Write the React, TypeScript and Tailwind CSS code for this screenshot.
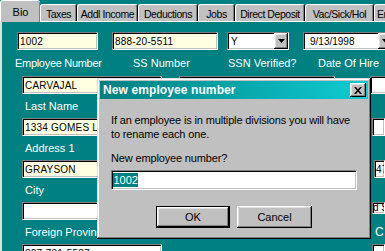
import React from "react";

const sunk =
  "border border-t-[#808080] border-l-[#808080] border-b-white border-r-white shadow-[inset_1px_1px_0_#000,inset_-1px_-1px_0_#c0c0c0]";
const raised =
  "bg-[#c0c0c0] shadow-[inset_-1px_-1px_0_#000,inset_1px_1px_0_#fff,inset_-2px_-2px_0_#808080,inset_2px_2px_0_#dfdfdf]";

function Tab({ w, label, selected, left }: { w: string; label: string; selected?: boolean; left?: boolean }) {
  if (selected) {
    return (
      <div
        className={`${w} shrink-0 h-[22px] -mb-[1px] relative z-10 bg-[#c0c0c0] border-t border-l border-white rounded-tl-[3px] rounded-tr-[3px] shadow-[inset_-1px_0_0_#808080] flex items-start justify-center pt-[3px] text-[11px] text-black`}
      >
        {label}
      </div>
    );
  }
  return (
    <div
      className={`${w} shrink-0 h-[17px] bg-[#c0c0c0] border-t border-l border-white border-r border-r-black rounded-tl-[3px] rounded-tr-[3px] shadow-[inset_-1px_0_0_#808080] flex items-start ${left ? "justify-start pl-[2px]" : "justify-center"} pt-[2px] text-[10.5px] tracking-[-0.45px] text-black whitespace-nowrap overflow-hidden`}
    >
      {label}
    </div>
  );
}

function DropBtn() {
  return (
    <div className={`${raised} w-[14px] shrink-0 h-full flex items-center justify-center`}>
      <svg width="7" height="4" viewBox="0 0 7 4">
        <path d="M0 0h7L3.5 4z" fill="#000" />
      </svg>
    </div>
  );
}

function Field({ cls, text, yellow, pad }: { cls: string; text?: string; yellow?: boolean; pad?: string }) {
  return (
    <div
      className={`${cls} shrink-0 ${sunk} ${yellow ? "bg-[#ffffe1]" : "bg-white"} h-[18px] flex items-center ${pad ?? "pl-[2px]"} text-[10px] tracking-[0.2px] text-black whitespace-nowrap overflow-hidden`}
    >
      {text}
    </div>
  );
}

export default function App() {
  return (
    <div className="relative w-[385px] h-[251px] overflow-hidden bg-[#008080] font-['Liberation_Sans',Arial,sans-serif]">
      {/* tabs */}
      <div className="flex items-end h-[21px] overflow-visible">
        <Tab w="w-[40px]" label="Bio" selected />
        <Tab w="w-[37px]" label="Taxes" />
        <Tab w="w-[61px]" label="Addl Income" />
        <Tab w="w-[60px]" label="Deductions" />
        <Tab w="w-[37px]" label="Jobs" />
        <Tab w="w-[70px]" label="Direct Deposit" />
        <Tab w="w-[69px]" label="Vac/Sick/Hol" />
        <Tab w="w-[60px]" label="Emergency" left />
      </div>

      {/* panel */}
      <div className="border-t border-l-2 border-t-white border-l-[#dfdfdf] h-[230px] flex flex-col">
        {/* row 1 */}
        <div className="flex items-center mt-[10px] h-[18px]">
          <Field cls="ml-[15px] w-[81px]" text="1002" yellow />
          <Field cls="ml-[14px] w-[106px]" text="888-20-5511" yellow />
          <div className={`ml-[9px] w-[62px] shrink-0 h-[18px] ${sunk} bg-white flex items-center`}>
            <span className="flex-1 pl-[3px] text-[10px] text-black">Y</span>
            <DropBtn />
          </div>
          <div className={`ml-[14px] w-[90px] shrink-0 h-[18px] ${sunk} bg-white flex items-center`}>
            <span className="flex-1 pl-[6px] text-[10px] text-black">9/13/1998</span>
            <DropBtn />
          </div>
        </div>
        {/* labels row 1 */}
        <div className="flex mt-[6px] h-[14px] text-[11px] leading-[14px] text-white whitespace-nowrap">
          <span className="ml-[13px] w-[118px] shrink-0 tracking-[-0.3px]">Employee Number</span>
          <span className="w-[95px] shrink-0">SS Number</span>
          <span className="w-[90px] shrink-0">SSN Verified?</span>
          <span>Date Of Hire</span>
        </div>

        {/* row 2 */}
        <div className="flex mt-[6px] h-[18px]">
          <Field cls="ml-[20px] w-[140px]" text="CARVAJAL" yellow />
          <Field cls="ml-[17px] w-[156px]" />
          <Field cls="ml-[35px] w-[20px]" />
        </div>
        <div className="flex mt-[5px] h-[14px] text-[11px] leading-[14px] text-white whitespace-nowrap">
          <span className="ml-[23px]">Last Name</span>
        </div>

        {/* row 3 */}
        <div className="flex mt-[5px] h-[18px]">
          <Field cls="ml-[20px] w-[140px]" text="1334 GOMES LN" yellow />
          <div className="flex-1" />
          <Field cls="w-[13px]" />
        </div>
        <div className="flex mt-[5px] h-[14px] text-[11px] leading-[14px] text-white whitespace-nowrap">
          <span className="ml-[23px]">Address 1</span>
        </div>

        {/* row 4 */}
        <div className="flex mt-[5px] h-[18px]">
          <Field cls="ml-[20px] w-[140px]" text="GRAYSON" yellow />
          <div className="flex-1" />
          <Field cls="w-[11px]" text="47" pad="pl-[1px]" />
        </div>
        <div className="flex mt-[5px] h-[14px] text-[11px] leading-[14px] text-white whitespace-nowrap">
          <span className="ml-[23px]">City</span>
        </div>

        {/* row 5 */}
        <div className="flex mt-[5px] h-[18px] items-start">
          <Field cls="ml-[20px] w-[140px]" />
          <div className="flex-1" />
          <div className={`w-[13px] shrink-0 h-[12px] ${sunk} bg-white text-[10px] leading-[10px] text-black overflow-hidden whitespace-nowrap`}>d S</div>
        </div>
        <div className="flex mt-[5px] h-[14px] text-[11px] leading-[14px] text-white whitespace-nowrap">
          <span className="ml-[23px]">Foreign Province</span>
          <div className="flex-1" />
          <span className="w-[10px] shrink-0 text-[12px]">C</span>
        </div>

        {/* row 6 */}
        <div className="flex mt-[5px] h-[18px]">
          <Field cls="ml-[20px] w-[140px]" text="827-731-5587" />
          <div className="flex-1" />
          <Field cls="w-[13px]" />
        </div>
      </div>

      {/* dialog */}
      <div className="absolute left-[97px] top-[78px] w-[274px] h-[161px] bg-[#c0c0c0] shadow-[inset_-1px_-1px_0_#000,inset_1px_1px_0_#dfdfdf,inset_-2px_-2px_0_#808080,inset_2px_2px_0_#fff] p-[3px] flex flex-col">
        <div className="h-[18px] bg-gradient-to-r from-[#008080] to-[#10ccd4] flex items-center pl-[3px] pr-[2px]">
          <span className="flex-1 text-white font-bold text-[12px] tracking-[0.1px]">New employee number</span>
          <div className={`${raised} w-[16px] h-[14px] flex items-center justify-center`}>
            <svg width="8" height="7" viewBox="0 0 8 7">
              <path d="M0 0h2l2 2.5L6 0h2L5 3.5 8 7H6L4 4.5 2 7H0l3-3.5z" fill="#000" />
            </svg>
          </div>
        </div>
        <div className="mt-[14px] ml-[11px] text-[11px] leading-[14px] text-black tracking-[-0.15px]">
          <div>If an employee is in multiple divisions you will have</div>
          <div>to rename each one.</div>
        </div>
        <div className="mt-[10px] ml-[11px] text-[11px] leading-[14px] text-black tracking-[-0.15px]">
          New employee number?
        </div>
        <div className={`mt-[5px] ml-[11px] w-[246px] h-[20px] ${sunk} bg-white flex items-center pl-[1px]`}>
          <span className="bg-[#008080] text-white text-[11px] leading-[14px] px-[0.5px]">1002</span>
        </div>
        <div className="mt-[16px] flex justify-center gap-[7px]">
          <div className="w-[74px] h-[22px] border border-black">
            <div className={`${raised} w-full h-full flex items-center justify-center text-[11px] text-black`}>OK</div>
          </div>
          <div className={`${raised} w-[75px] h-[22px] flex items-center justify-center text-[11px] text-black`}>Cancel</div>
        </div>
      </div>
    </div>
  );
}
